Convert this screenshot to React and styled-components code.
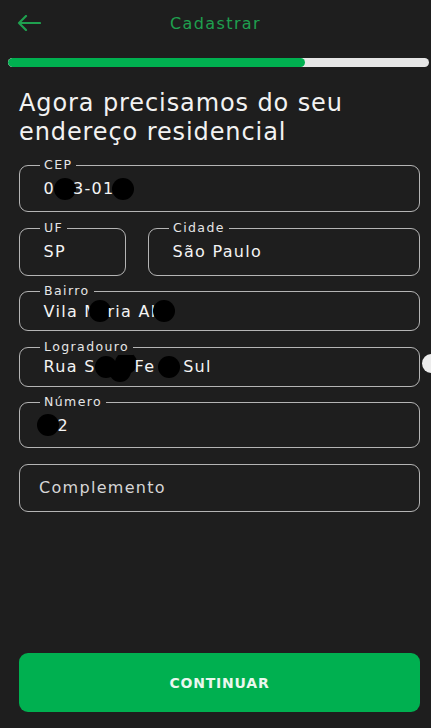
import React from "react";
import styled, { createGlobalStyle } from "styled-components";

const Global = createGlobalStyle`
  html, body { margin: 0; padding: 0; background: #1e1e1e; }
  body { font-family: "DejaVu Sans", "Noto Sans", sans-serif; overflow: hidden; }
  * { box-sizing: border-box; }
`;

const Page = styled.div`
  position: relative;
  min-height: 728px;
  display: flex;
  flex-direction: column;
  background: #1e1e1e;
  color: #f0f0f0;
  padding-bottom: 16px;
`;

const Header = styled.header`
  height: 46px;
  display: grid;
  grid-template-columns: 60px 1fr 60px;
  align-items: center;
`;

const BackButton = styled.button`
  background: none;
  border: 0;
  padding: 0 0 0 17px;
  height: 46px;
  display: flex;
  align-items: center;
  cursor: pointer;
`;

const Title = styled.h1`
  margin: 0;
  text-align: center;
  font-size: 16px;
  font-weight: 500;
  letter-spacing: 1.4px;
  color: #1fa04f;
`;

const Progress = styled.div`
  margin: 12px 2px 0 8px;
  height: 9px;
  border-radius: 5px;
  background: #e6e6e6;
  overflow: hidden;
`;

const ProgressFill = styled.div`
  height: 100%;
  background: #00b050;
  border-radius: 5px;
`;

const Content = styled.main`
  padding: 0 11px 0 19px;
  display: flex;
  flex-direction: column;
`;

const Heading = styled.h2`
  margin: 22px 0 18px;
  font-size: 24px;
  line-height: 29px;
  font-weight: 400;
  letter-spacing: 0.9px;
  color: #f2f2f2;
`;

const Form = styled.div`
  display: flex;
  flex-direction: column;
  gap: 15.6px;
`;

const Row = styled.div`
  display: grid;
  grid-template-columns: 107px 1fr;
  gap: 22px;
`;

const Field = styled.div`
  position: relative;
  height: ${(p) => p.$h}px;
  border: 1.5px solid #b4b4b4;
  border-radius: 9px;
  display: flex;
  align-items: center;
  padding-left: ${(p) => (p.$plain ? 19 : 23.5)}px;
`;

const Label = styled.span`
  position: absolute;
  left: 20px;
  top: -9px;
  padding: 0 4px;
  background: #1e1e1e;
  font-size: 12.5px;
  line-height: 16px;
  letter-spacing: 1.4px;
  color: #e6e6e6;
`;

const Value = styled.span`
  font-size: 16px;
  letter-spacing: 1.3px;
  color: ${(p) => (p.$placeholder ? "#d6d6d6" : "#f4f4f4")};
  font-weight: ${(p) => (p.$placeholder ? 400 : 500)};
  display: flex;
  align-items: center;
  white-space: pre;
`;

/* redaction marks painted over the text in the screenshot */
const Dot = styled.span`
  display: inline-block;
  flex: none;
  width: 22px;
  height: 22px;
  border-radius: 50%;
  background: #000;
  margin: 0 ${(p) => p.$mr ?? -2}px 0 ${(p) => p.$ml ?? -2}px;
  align-self: ${(p) => p.$align || "center"};
`;

const DotCluster = styled.span`
  display: inline-flex;
  align-items: center;
  height: 30px;
  margin: 0 -2px 0 -1px;
`;

const Button = styled.button`
  margin: auto 11px 0 19px;
  height: 59px;
  border: 0;
  border-radius: 9px;
  background: #00b050;
  color: #eaf7ee;
  font-family: "DejaVu Sans", sans-serif;
  font-size: 14px;
  font-weight: 700;
  letter-spacing: 0.8px;
  cursor: pointer;
`;

const EdgeKnob = styled.span`
  position: absolute;
  right: -10px;
  top: 354px;
  width: 19px;
  height: 19px;
  border-radius: 50%;
  background: #ececec;
`;

function BackArrow() {
  return (
    <svg width="24" height="16" viewBox="0 0 24 16" fill="none">
      <path d="M23 8H2M9 1L2 8l7 7" stroke="#1fa04f" strokeWidth="2.2" strokeLinecap="round" strokeLinejoin="round" />
    </svg>
  );
}

export default function App() {
  const progress = 70.6;
  return (
    <>
      <Global />
      <Page>
        <Header>
          <BackButton aria-label="Voltar">
            <BackArrow />
          </BackButton>
          <Title>Cadastrar</Title>
          <span />
        </Header>
        <Progress>
          <ProgressFill style={{ width: `${progress}%` }} />
        </Progress>
        <Content>
          <Heading>
            Agora precisamos do seu
            <br />
            endereço residencial
          </Heading>
          <Form>
            <Field $h={47}>
              <Label>CEP</Label>
              <Value>
                0<Dot $ml={-1} $mr={-3} />3-01<Dot $ml={-3} />
              </Value>
            </Field>
            <Row>
              <Field $h={48}>
                <Label>UF</Label>
                <Value>SP</Value>
              </Field>
              <Field $h={48}>
                <Label>Cidade</Label>
                <Value>São Paulo</Value>
              </Field>
            </Row>
            <Field $h={40}>
              <Label>Bairro</Label>
              <Value>
                Vila M<Dot $ml={-10} $mr={-4} />ria Al<Dot $ml={-4} />
              </Value>
            </Field>
            <Field $h={40}>
              <Label>Logradouro</Label>
              <Value>
                Rua S
                <DotCluster>
                  <Dot $ml={0} $mr={-4} />
                  <Dot $ml={-4} $mr={-16} $align="flex-end" />
                  <Dot $ml={0} $mr={0} $align="flex-start" />
                </DotCluster>
                Fe <Dot $ml={-4} $mr={-3} /> Sul
              </Value>
            </Field>
            <Field $h={46}>
              <Label>Número</Label>
              <Value>
                <Dot $ml={-7} $mr={-1} />2
              </Value>
            </Field>
            <Field $h={48} $plain>
              <Value $placeholder>Complemento</Value>
            </Field>
          </Form>
        </Content>
        <Button>CONTINUAR</Button>
        <EdgeKnob />
      </Page>
    </>
  );
}
